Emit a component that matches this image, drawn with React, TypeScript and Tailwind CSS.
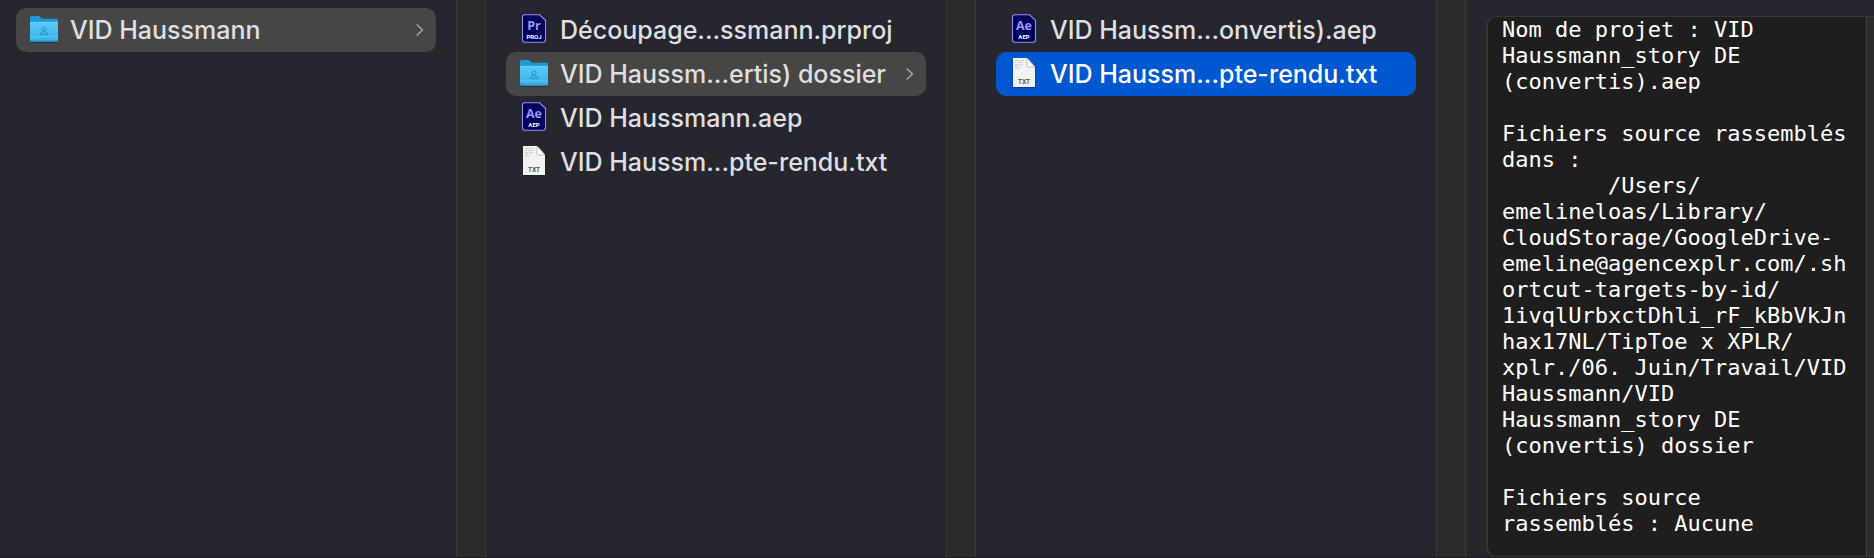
import clsx from 'clsx'

type Kind = 'folder' | 'premiere' | 'aftereffects' | 'text'

interface Entry {
  name: string
  kind: Kind
  state?: 'open' | 'selected'
}

const columns: Entry[][] = [
  [{ name: 'VID Haussmann', kind: 'folder', state: 'open' }],
  [
    { name: 'Découpage...ssmann.prproj', kind: 'premiere' },
    { name: 'VID Haussm...ertis) dossier', kind: 'folder', state: 'open' },
    { name: 'VID Haussmann.aep', kind: 'aftereffects' },
    { name: 'VID Haussm...pte-rendu.txt', kind: 'text' }
  ],
  [
    { name: 'VID Haussm...onvertis).aep', kind: 'aftereffects' },
    { name: 'VID Haussm...pte-rendu.txt', kind: 'text', state: 'selected' }
  ]
]

const report = `Nom de projet : VID
Haussmann_story DE
(convertis).aep

Fichiers source rassemblés
dans :
        /Users/
emelineloas/Library/
CloudStorage/GoogleDrive-
emeline@agencexplr.com/.sh
ortcut-targets-by-id/
1ivqlUrbxctDhli_rF_kBbVkJn
hax17NL/TipToe x XPLR/
xplr./06. Juin/Travail/VID
Haussmann/VID
Haussmann_story DE
(convertis) dossier

Fichiers source
rassemblés : Aucune`

export default function App() {
  return (
    <main className="grid min-h-screen grid-cols-[486fr_490fr_490fr_408fr] border-b border-[#1f1d22] bg-[#26262f] font-['Inter',sans-serif] text-[#dfdfe1]">
      {columns.map((entries, index) => (
        <Column key={index} entries={entries} isFirst={index === 0} />
      ))}
      <Preview />
    </main>
  )
}

function Column({ entries, isFirst }: { entries: Entry[]; isFirst: boolean }) {
  return (
    <section className="flex min-w-0">
      <ul className={clsx('min-w-0 flex-1 pt-2 pr-5', isFirst ? 'pl-4' : 'pl-5')}>
        {entries.map((entry) => (
          <li key={entry.name}>
            <Row entry={entry} />
          </li>
        ))}
      </ul>
      <div className="w-[30px] shrink-0 border-x border-[#3b3b3c] bg-[#2b2b2b]" />
    </section>
  )
}

function Row({ entry }: { entry: Entry }) {
  return (
    <button
      type="button"
      className={clsx(
        'flex h-11 w-full items-center gap-3 rounded-[10px] px-3 pl-3.5 text-left text-[25px] leading-8 font-medium',
        entry.state === 'open' && 'bg-[#464646]',
        entry.state === 'selected' && 'bg-[#0058d0] text-white'
      )}
    >
      <FileIcon kind={entry.kind} />
      <span className="min-w-0 flex-1 whitespace-nowrap">{entry.name}</span>
      {entry.kind === 'folder' && (
        <svg className="h-3.5 w-2 shrink-0" viewBox="0 0 8 14" fill="none" aria-hidden="true">
          <path
            d="M1.200 2 6.500 7 1.200 12"
            stroke="#a5a5a5"
            strokeWidth="1.600"
            strokeLinecap="round"
            strokeLinejoin="round"
          />
        </svg>
      )}
    </button>
  )
}

function FileIcon({ kind }: { kind: Kind }) {
  switch (kind) {
    case 'folder':
      return <FolderIcon />
    case 'premiere':
      return <AdobeIcon short="Pr" label="PROJ" />
    case 'aftereffects':
      return <AdobeIcon short="Ae" label="AEP" />
    default:
      return <TextIcon />
  }
}

function FolderIcon() {
  return (
    <svg className="h-8 w-7 shrink-0" viewBox="0 0 28 32" aria-hidden="true">
      <defs>
        <linearGradient id="folder-front" x1="0" y1="0" x2="0" y2="1">
          <stop offset="0" stopColor="#5bcbf9" />
          <stop offset="1" stopColor="#36afe6" />
        </linearGradient>
      </defs>
      <rect x="0.5" y="10" width="27" height="19" rx="1.5" fill="#1d3038" opacity="0.8" />
      <path
        d="M0 3.500Q0 2 1.500 2H8q1 0 1.800.700L11.500 4.200q.800.600 1.800.600h13.200Q28 4.800 28 6.300v18H0Z"
        fill="#1d9ad3"
      />
      <path d="M0 8h28V26q0 1.800-1.800 1.800H1.800Q0 27.800 0 26Z" fill="url(#folder-front)" />
      <path d="M.5 8.300h27" stroke="#78d6fa" strokeWidth="0.600" />
      <path d="M0 22.800h28" stroke="#7bd4f8" strokeWidth="0.600" />
      <path d="M0 26.800h28" stroke="#2795c8" strokeWidth="0.800" />
      <g fill="none" stroke="#2c92c2" strokeWidth="0.900">
        <circle cx="14" cy="15" r="2" />
        <path d="M13 16.900v1.200q-2.900.400-2.900 2.300h7.800q0-1.900-2.900-2.300v-1.200" />
      </g>
    </svg>
  )
}

function AdobeIcon({ short, label }: { short: string; label: string }) {
  return (
    <svg className="h-8 w-7 shrink-0" viewBox="0 0 28 32" aria-hidden="true">
      <path
        d="M5 .8h14.500l6 5.500v19.400q0 2.500-2.500 2.500H5q-2.500 0-2.500-2.500V3.300Q2.500.8 5 .8Z"
        fill="#00005b"
        stroke="#9494f0"
        strokeWidth="1.100"
      />
      <text
        x="14"
        y="15.500"
        textAnchor="middle"
        fill="#9999ff"
        fontFamily="Open Sans, sans-serif"
        fontSize="12.500"
        fontWeight="700"
      >
        {short}
      </text>
      <text
        x="14"
        y="25"
        textAnchor="middle"
        fill="#ffffff"
        fontFamily="Roboto, sans-serif"
        fontSize="6"
        fontWeight="700"
      >
        {label}
      </text>
    </svg>
  )
}

function TextIcon() {
  return (
    <svg className="h-8 w-7 shrink-0" viewBox="0 0 28 32" aria-hidden="true">
      <path d="M2.500 1H17l8.500 8.500v20.300h-23Z" fill="#15151a" opacity="0.500" />
      <path d="M3 0h14l8 8.500V29H3Z" fill="#f2f2f2" />
      <path d="M17 0 25 9h-7q-1 0-1-1Z" fill="#ffffff" stroke="#a8a8a8" strokeWidth="0.700" />
      <path
        d="M5 2.500h4m1 0h4M5 4.500h2m1 0h5M5 6.500h4m1 0h3M5 8.500h3m1 0h2M5 10.500h4"
        stroke="#c4c4c4"
        strokeWidth="0.800"
      />
      <text
        x="14"
        y="26"
        textAnchor="middle"
        fill="#505050"
        fontFamily="Inter, sans-serif"
        fontSize="6"
        fontWeight="700"
      >
        TXT
      </text>
    </svg>
  )
}

function Preview() {
  return (
    <section className="flex min-w-0 pt-4 pl-5">
      <div className="flex min-w-0 flex-1 overflow-hidden rounded-l-[10px] border-y border-l-2 border-[#363637] bg-[#1e1e1e]">
        <pre className="min-w-0 flex-1 overflow-hidden pl-3.5 font-['DejaVu_Sans_Mono',monospace] text-[22px] leading-[26px] text-white">
          {report}
        </pre>
        <div className="w-2 shrink-0 border-l border-[#404040] bg-[#2b2b2b]" />
      </div>
    </section>
  )
}
